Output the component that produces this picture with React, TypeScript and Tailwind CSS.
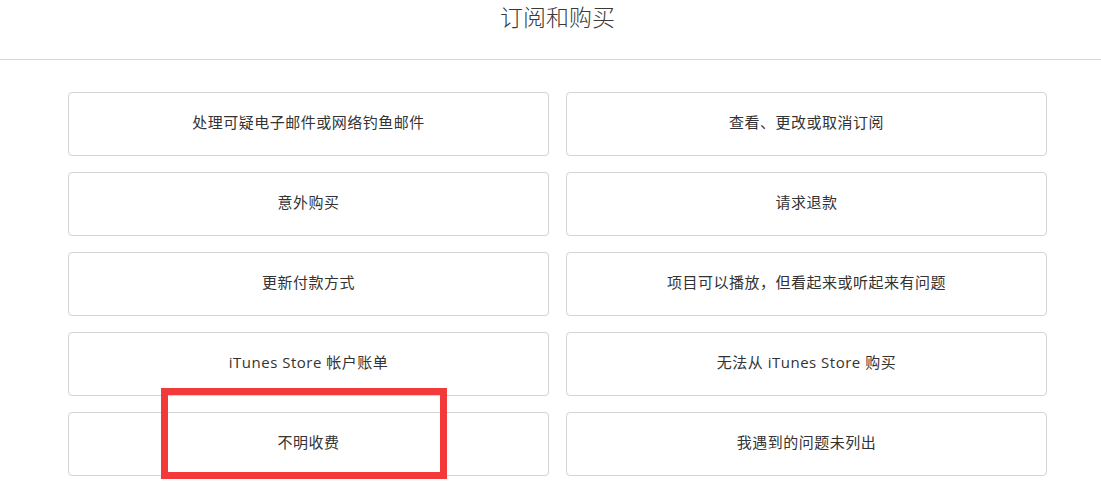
import React from 'react';

const TOPICS: string[] = [
  '处理可疑电子邮件或网络钓鱼邮件',
  '查看、更改或取消订阅',
  '意外购买',
  '请求退款',
  '更新付款方式',
  '项目可以播放，但看起来或听起来有问题',
  'iTunes Store 帐户账单',
  '无法从 iTunes Store 购买',
  '不明收费',
  '我遇到的问题未列出',
];

const App: React.FC = () => {
  return (
    <div
      className="relative w-[1101px] h-[504px] overflow-hidden bg-white text-[#333]"
      style={{ fontFamily: '"Open Sans", "Noto Sans CJK SC", sans-serif' }}
    >
      <div className="pl-[14px] h-[59px] flex items-start justify-center">
        <h2 className="pt-[2px] text-[23px] leading-[30px] font-light text-[#3a3a3a]">订阅和购买</h2>
      </div>
      <div className="h-px bg-[#d6d6d6]" />

      <div className="pl-[14px] pt-[32px]">
        <div className="mx-auto w-[979px] grid grid-cols-2 gap-x-[17px] gap-y-[16px]">
          {TOPICS.map((t) => (
            <a
              key={t}
              href="#"
              className="h-[64px] pb-[3px] flex items-center justify-center rounded-[4px] border border-[#d4d4d4] bg-white text-[15px] tracking-[0.5px] text-[#333]"
            >
              {t}
            </a>
          ))}
        </div>
      </div>

      {/* annotation box */}
      <div className="absolute left-[161px] top-[388px] w-[286px] h-[91px] border-[7px] border-[#f33a3a]" />
    </div>
  );
};

export default App;
